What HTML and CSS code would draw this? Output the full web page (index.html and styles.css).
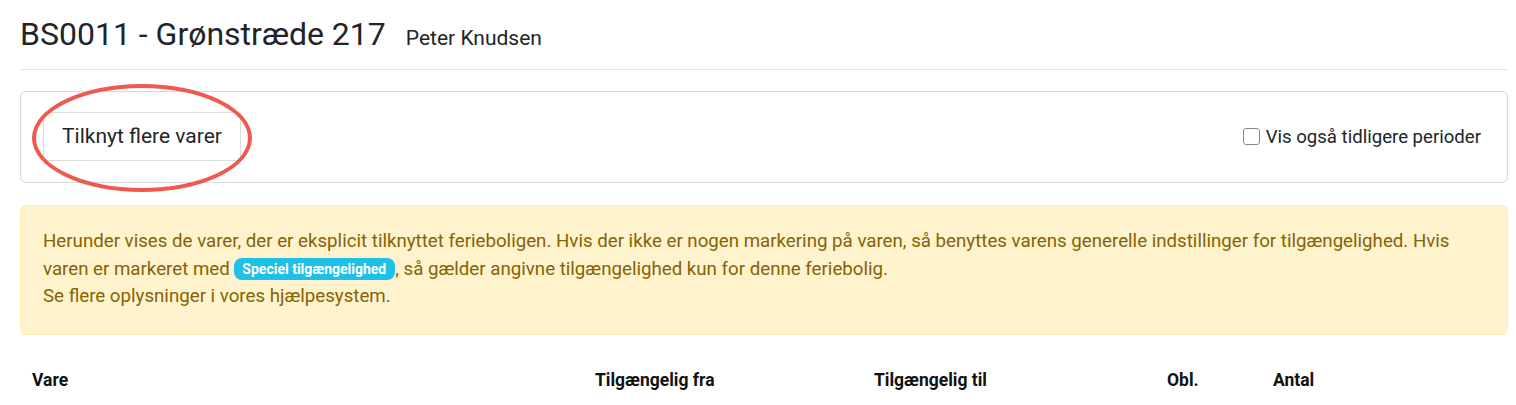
FILE: index.html
```html
<!DOCTYPE html>
<html>
<head>
    <title>BS0011 - Grønstræde 217</title>
    <meta charset="utf-8" />
    <meta name="viewport" content="width=device-width, initial-scale=1.0">
    <link rel="stylesheet" href="styles.css">
</head>
<body>
    <div class="page">
        <div class="page-header">
            <h1 class="page-title">BS0011 - Grønstræde 217</h1>
            <span class="page-owner">Peter Knudsen</span>
        </div>

        <div class="toolbar-card">
            <div class="button-wrap">
                <button class="btn-plain" id="addItemsButton">Tilknyt flere varer</button>
                <span class="highlight-ring"></span>
            </div>
            <label class="check-label">
                <input type="checkbox" class="check-box" id="showPrevious">
                Vis også tidligere perioder
            </label>
        </div>

        <div class="info-alert">
            Herunder vises de varer, der er eksplicit tilknyttet ferieboligen. Hvis der ikke er nogen markering på varen, så benyttes varens generelle indstillinger for tilgængelighed. Hvis
            varen er markeret med <span class="badge-info">Speciel tilgængelighed</span>, så gælder angivne tilgængelighed kun for denne feriebolig.<br>
            Se flere oplysninger i vores hjælpesystem.
        </div>

        <table class="items-table">
            <thead>
                <tr>
                    <th class="col-item">Vare</th>
                    <th class="col-from">Tilgængelig fra</th>
                    <th class="col-to">Tilgængelig til</th>
                    <th class="col-req">Obl.</th>
                    <th class="col-count">Antal</th>
                </tr>
            </thead>
        </table>
    </div>
</body>
</html>
```

FILE: styles.css
```css
body {
    margin: 0;
    font-family: Roboto, "Liberation Sans", Arial, sans-serif;
    color: #212529;
    background: #fff;
}

.page {
    padding: 0 8px 0 20px;
}

.page-header {
    display: flex;
    align-items: baseline;
    gap: 20px;
    padding: 16px 0 16px;
    border-bottom: 1px solid #e3e3e3;
}

.page-title {
    margin: 0;
    font-size: 32px;
    font-weight: 400;
    line-height: 37px;
}

.page-owner {
    font-size: 21px;
}

.toolbar-card {
    display: flex;
    align-items: center;
    justify-content: space-between;
    margin-top: 21px;
    padding: 20px 26px 21px 22px;
    border: 1px solid #d9d9d9;
    border-radius: 6px;
}

.button-wrap {
    position: relative;
}

.btn-plain {
    font-family: inherit;
    font-size: 21px;
    color: #212529;
    background: #fff;
    border: 1px solid #dcdcdc;
    border-radius: 4px;
    padding: 11px 18px;
    line-height: 25px;
    cursor: pointer;
}

.highlight-ring {
    position: absolute;
    left: -11px;
    top: -28px;
    width: 212px;
    height: 100px;
    border: 4px solid #ef5a4e;
    border-radius: 50%;
    pointer-events: none;
}

.check-label {
    display: flex;
    align-items: center;
    gap: 6px;
    font-size: 18.6px;
    color: #212529;
}

.check-box {
    margin: 0;
    width: 17px;
    height: 17px;
    appearance: none;
    border: 1.5px solid #8a8a8a;
    border-radius: 3px;
    background: #fff;
}

.info-alert {
    margin-top: 22px;
    padding: 22px 22px 23px;
    background: #fff3cd;
    border: 1px solid #ffeeba;
    border-radius: 6px;
    color: #856404;
    font-size: 18.7px;
    line-height: 27.5px;
}

.badge-info {
    display: inline-block;
    background: #1ec0e8;
    color: #fff;
    font-size: 14px;
    font-weight: 700;
    line-height: 16px;
    padding: 3px 9px 3px 8px;
    border-radius: 8px;
    vertical-align: 1px;
}

.items-table {
    width: 100%;
    margin-top: 27px;
    border-collapse: collapse;
}

.items-table th {
    text-align: left;
    font-size: 17.5px;
    font-weight: 700;
    color: #111;
    padding: 8px 12px;
}

.col-item { width: 539px; }
.col-from { width: 255px; }
.col-to { width: 269px; }
.col-req { width: 82px; }
```
